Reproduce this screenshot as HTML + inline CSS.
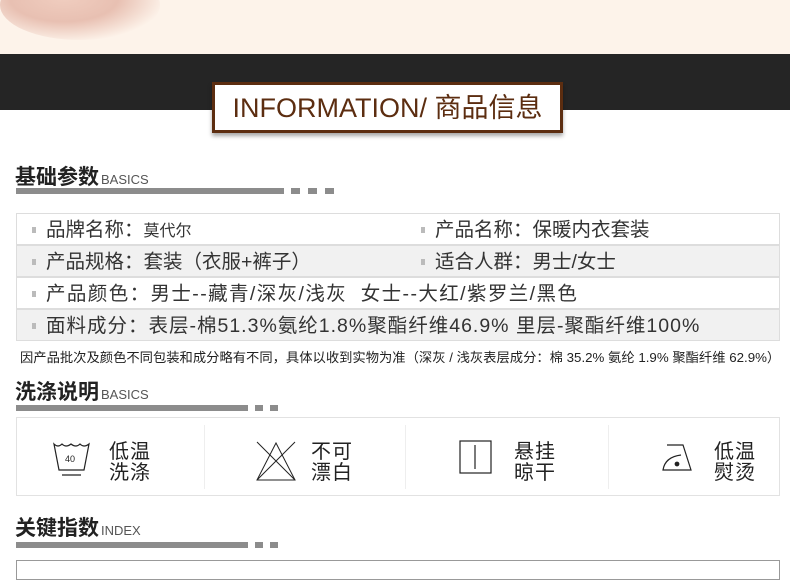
<!DOCTYPE html>
<html><head><meta charset="utf-8"><style>
*{margin:0;padding:0;box-sizing:border-box}
body{width:790px;height:568px;overflow:hidden;background:#fff;font-family:"Liberation Sans","Noto Sans CJK SC",sans-serif;position:relative;color:#333}
.a{position:absolute}
.h{font-weight:bold;font-size:21px;color:#222;left:15px}
.h span{font-weight:normal;font-size:13px;color:#555;margin-left:2px}
.bar{height:6px;background:#8c8c8c}
.row{position:absolute;left:16px;width:764px;height:32px;border:1px solid #ddd;font-size:19.5px;color:#333;line-height:32px}
.row i{position:absolute;width:4px;height:6px;background:#bbb;top:13px}
.row b{font-weight:normal;position:absolute;top:0;white-space:nowrap}
.cell{position:absolute;top:417px;height:79px;font-size:20px;line-height:21px;color:#222;letter-spacing:1px}
</style></head><body>
<div class="a" style="left:0;top:0;width:790px;height:54px;background:#fdf3ea"></div>
<div class="a" style="left:0;top:-30px;width:160px;height:70px;border-radius:50%;background:radial-gradient(ellipse at 40% 40%,#f0cdbf 0%,#e8c0b2 40%,rgba(253,243,234,0) 75%)"></div>
<div class="a" style="left:0;top:54px;width:790px;height:56px;background:#252525"></div>
<div class="a" style="left:212px;top:82px;width:351px;height:51px;background:#fff;border:3px solid #5c2d10;box-shadow:0 3px 4px rgba(0,0,0,.35);color:#5c2d10;font-size:27px;line-height:47px;text-align:center;white-space:nowrap">INFORMATION/ 商品信息</div>

<div class="a h" style="top:161px">基础参数<span>BASICS</span></div>
<div class="a bar" style="left:16px;top:188px;width:268px"></div>
<div class="a bar" style="left:291px;top:188px;width:9px"></div>
<div class="a bar" style="left:308px;top:188px;width:9px"></div>
<div class="a bar" style="left:325px;top:188px;width:9px"></div>

<div class="row" style="top:213px;background:#fff"><i style="left:15px"></i><b style="left:29px">品牌名称：<span style="font-size:16px">莫代尔</span></b><i style="left:404px"></i><b style="left:418px">产品名称：保暖内衣套装</b></div>
<div class="row" style="top:245px;background:#f1f1f1"><i style="left:15px"></i><b style="left:29px">产品规格：套装（衣服+裤子）</b><i style="left:404px"></i><b style="left:418px">适合人群：男士/女士</b></div>
<div class="row" style="top:277px;background:#fff"><i style="left:15px"></i><b style="left:29px;letter-spacing:1.4px">产品颜色：男士--藏青/深灰/浅灰&nbsp; 女士--大红/紫罗兰/黑色</b></div>
<div class="row" style="top:309px;background:#f1f1f1;height:32px"><i style="left:15px"></i><b style="left:29px;letter-spacing:1px">面料成分：表层-棉51.3%氨纶1.8%聚酯纤维46.9% 里层-聚酯纤维100%</b></div>
<div class="a" style="left:20px;top:347px;font-size:13.3px;color:#222;white-space:nowrap">因产品批次及颜色不同包装和成分略有不同，具体以收到实物为准（深灰 / 浅灰表层成分：棉 35.2% 氨纶 1.9% 聚酯纤维 62.9%）</div>

<div class="a h" style="top:376px">洗涤说明<span>BASICS</span></div>
<div class="a bar" style="left:16px;top:405px;width:232px"></div>
<div class="a bar" style="left:255px;top:405px;width:8px"></div>
<div class="a bar" style="left:270px;top:405px;width:8px"></div>

<div class="a" style="left:16px;top:417px;width:764px;height:79px;border:1px solid #e2e2e2"></div>
<div class="a" style="left:204px;top:425px;width:1px;height:64px;background:#eee"></div>
<div class="a" style="left:405px;top:425px;width:1px;height:64px;background:#eee"></div>
<div class="a" style="left:608px;top:425px;width:1px;height:64px;background:#eee"></div>
<svg class="a" style="left:52px;top:440px" width="40" height="40" viewBox="0 0 40 40" fill="none" stroke="#222" stroke-width="1.2"><path d="M2 4 Q6 8 10 4 Q14 8 19 4 Q24 8 28 4 Q32 8 37 4 L32 30 H7 Z"/><path d="M10 35 H29"/><text x="13" y="22" font-size="9" fill="#222" stroke="none" font-family="Liberation Sans">40</text></svg>
<div class="cell" style="left:109px;top:442px">低温<br>洗涤</div>
<svg class="a" style="left:255px;top:440px" width="42" height="42" viewBox="0 0 42 42" fill="none" stroke="#222" stroke-width="1"><path d="M21 3 L40 40 H2 Z"/><path d="M2 2 L40 40 M40 2 L2 40"/></svg>
<div class="cell" style="left:311px;top:442px">不可<br>漂白</div>
<svg class="a" style="left:459px;top:440px" width="36" height="36" viewBox="0 0 36 36" fill="none" stroke="#222" stroke-width="1.2"><rect x="1" y="1" width="31" height="32"/><path d="M16 5 V29"/></svg>
<div class="cell" style="left:514px;top:442px">悬挂<br>晾干</div>
<svg class="a" style="left:661px;top:440px" width="40" height="36" viewBox="0 0 40 36" fill="none" stroke="#222" stroke-width="1.2"><path d="M6 5 H22 L30 30 H2 Q4 17 20 15"/><circle cx="16" cy="24" r="1.8" fill="#222"/></svg>
<div class="cell" style="left:714px;top:442px">低温<br>熨烫</div>

<div class="a h" style="top:512px">关键指数<span>INDEX</span></div>
<div class="a bar" style="left:16px;top:542px;width:232px"></div>
<div class="a bar" style="left:255px;top:542px;width:8px"></div>
<div class="a bar" style="left:270px;top:542px;width:8px"></div>
<div class="a" style="left:16px;top:560px;width:764px;height:20px;border:1px solid #999"></div>
</body></html>
